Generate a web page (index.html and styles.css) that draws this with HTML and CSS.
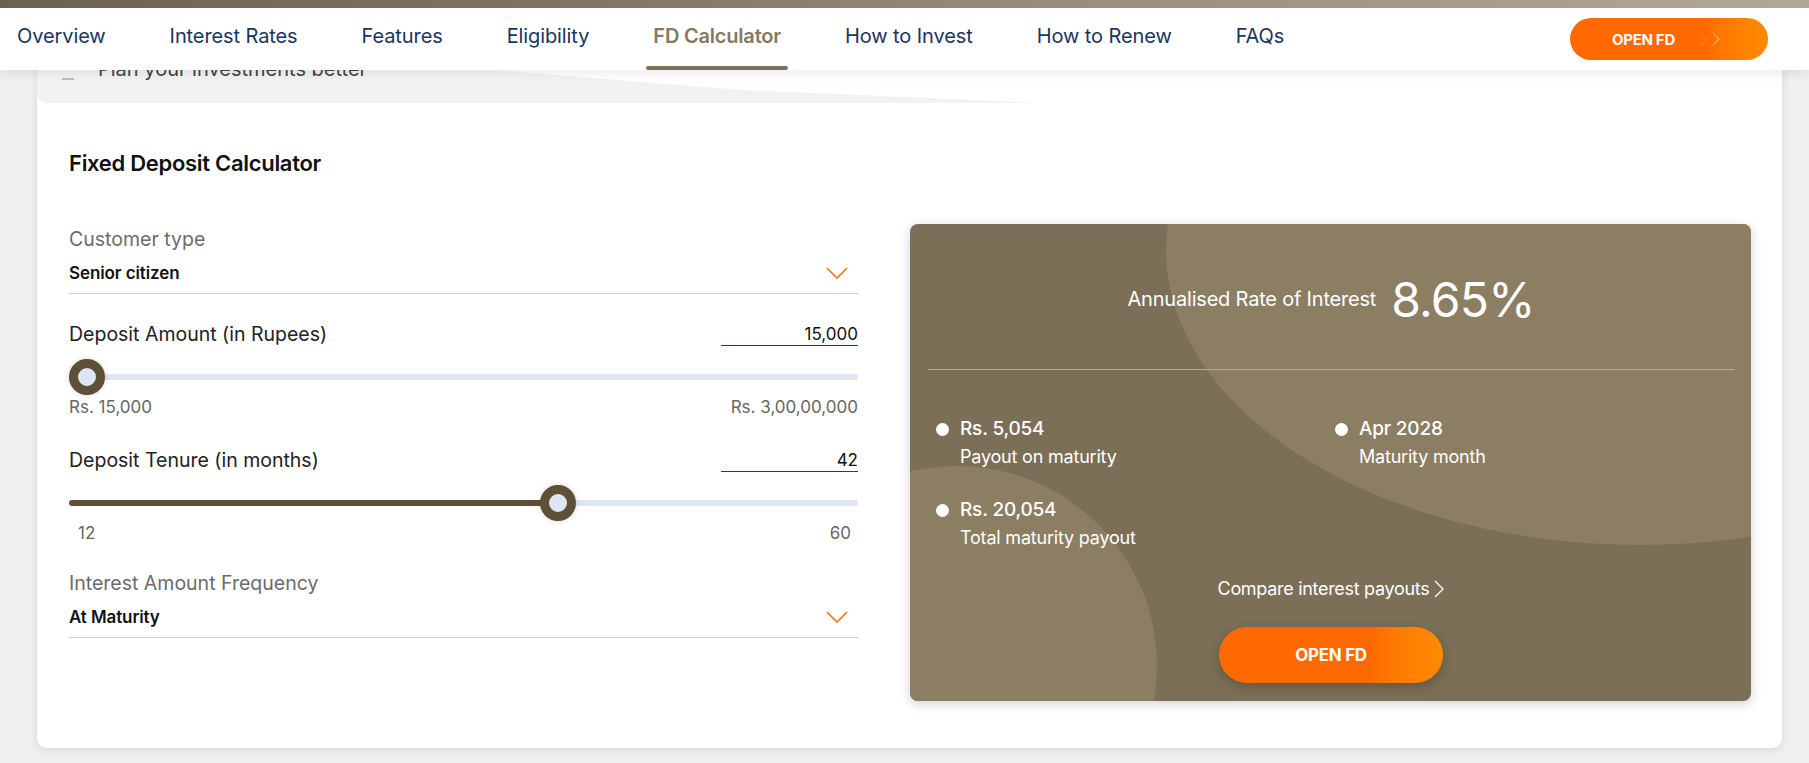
FILE: index.html
```html
<!DOCTYPE html>
<html lang="en">
<head>
    <meta charset="UTF-8">
    <meta name="viewport" content="width=device-width, initial-scale=1.0">
    <title>FD Calculator</title>
    <link rel="stylesheet" href="styles.css">
</head>
<body>
    <div class="topline"></div>

    <header class="nav">
        <ul class="nav-links">
            <li><a href="#">Overview</a></li>
            <li><a href="#">Interest Rates</a></li>
            <li><a href="#">Features</a></li>
            <li><a href="#">Eligibility</a></li>
            <li class="active"><a href="#">FD Calculator</a></li>
            <li><a href="#">How to Invest</a></li>
            <li><a href="#">How to Renew</a></li>
            <li><a href="#">FAQs</a></li>
        </ul>
        <a href="#" class="btn-open btn-nav">
            OPEN FD
            <svg class="arrows" width="24" height="14" viewBox="0 0 24 14">
                <polyline points="2,1 8,7 2,13" class="arrow-1"/>
                <polyline points="14,1 20,7 14,13" class="arrow-2"/>
            </svg>
        </a>
    </header>

    <main class="page">
        <section class="card">
            <div class="banner">
                <span class="banner-icon"></span>
                <p>Plan your investments better</p>
            </div>

            <div class="calc">
                <h2>Fixed Deposit Calculator</h2>

                <div class="calc-grid">
                    <!-- inputs -->
                    <form class="calc-form">
                        <div class="select-field">
                            <label>Customer type</label>
                            <div class="select-value">
                                <span>Senior citizen</span>
                                <svg class="chevron" width="22" height="12" viewBox="0 0 22 12"><polyline points="1,1 11,11 21,1"/></svg>
                            </div>
                        </div>

                        <div class="range-field">
                            <div class="range-head">
                                <label>Deposit Amount (in Rupees)</label>
                                <input type="text" class="amount" value="15,000">
                            </div>
                            <input type="range" class="slider" min="15000" max="30000000" value="15000" style="--fill: 0%">
                            <div class="range-limits">
                                <span>Rs. 15,000</span>
                                <span>Rs. 3,00,00,000</span>
                            </div>
                        </div>

                        <div class="range-field">
                            <div class="range-head">
                                <label>Deposit Tenure (in months)</label>
                                <input type="text" class="amount" value="42">
                            </div>
                            <input type="range" class="slider" min="12" max="60" value="42" style="--fill: 62%">
                            <div class="range-limits months">
                                <span>12</span>
                                <span>60</span>
                            </div>
                        </div>

                        <div class="select-field">
                            <label>Interest Amount Frequency</label>
                            <div class="select-value">
                                <span>At Maturity</span>
                                <svg class="chevron" width="22" height="12" viewBox="0 0 22 12"><polyline points="1,1 11,11 21,1"/></svg>
                            </div>
                        </div>
                    </form>

                    <!-- result -->
                    <div class="result">
                        <div class="blob blob-big"></div>
                        <div class="blob blob-small"></div>

                        <div class="rate">
                            <span class="rate-label">Annualised Rate of Interest</span>
                            <span class="rate-value">8.65%</span>
                        </div>
                        <hr class="divider">

                        <div class="stats">
                            <div class="stat">
                                <div class="stat-value">Rs. 5,054</div>
                                <div class="stat-label">Payout on maturity</div>
                            </div>
                            <div class="stat">
                                <div class="stat-value">Apr 2028</div>
                                <div class="stat-label">Maturity month</div>
                            </div>
                            <div class="stat">
                                <div class="stat-value">Rs. 20,054</div>
                                <div class="stat-label">Total maturity payout</div>
                            </div>
                        </div>

                        <a href="#" class="compare">
                            Compare interest payouts
                            <svg width="10" height="18" viewBox="0 0 10 18"><polyline points="1,1 9,9 1,17"/></svg>
                        </a>

                        <div class="result-action">
                            <a href="#" class="btn-open btn-big">OPEN FD</a>
                        </div>
                    </div>
                </div>
            </div>
        </section>
    </main>
</body>
</html>
```

FILE: styles.css
```css
body {
    margin: 0;
    background-color: #efefef;
    font-family: Inter, "Noto Sans", sans-serif;
    color: #222;
}
a {
    text-decoration: none;
}

/* thin strip above the menu */
.topline {
    height: 8px;
    background: linear-gradient(90deg, #6c6250 0%, #7f745f 30%, #9a8f7a 60%, #b2a896 100%);
}

/* menu */
.nav {
    position: relative;
    z-index: 5;
    height: 62px;
    display: flex;
    align-items: center;
    padding: 0 41px 0 10px;
    background-color: #fff;
    box-shadow: 0 4px 10px rgba(0, 0, 0, 0.07);
}
.nav-links {
    display: flex;
    gap: 50px;
    height: 100%;
    margin: 0;
    padding: 0;
    list-style: none;
}
.nav-links li {
    position: relative;
    display: flex;
    align-items: center;
    padding: 0 7px 6px;
}
.nav-links a {
    font-size: 20px;
    color: #1c3560;
    letter-spacing: -0.1px;
}
.nav-links .active a {
    color: #857a5e;
    font-weight: 600;
    letter-spacing: -0.2px;
}
.nav-links .active::after {
    content: "";
    position: absolute;
    left: 0;
    right: 0;
    bottom: 0;
    height: 4px;
    border-radius: 2px;
    background-color: #7d7055;
}

/* orange pill button */
.btn-open {
    display: inline-flex;
    align-items: center;
    color: #fff;
    font-weight: 700;
    letter-spacing: -0.3px;
    border-radius: 30px;
    background: linear-gradient(90deg, #ff6900 0%, #ff6900 68%, #ff7600 76%, #ff8200 88%, #ff8a00 100%);
}
.btn-nav {
    margin-left: auto;
    width: 198px;
    height: 42px;
    box-sizing: border-box;
    padding-left: 42px;
    font-size: 15px;
}
.btn-nav .arrows {
    margin-left: 24px;
    fill: none;
    stroke-width: 1.4;
}
.arrow-1 {
    stroke: rgba(255, 255, 255, 0.1);
}
.arrow-2 {
    stroke: rgba(255, 255, 255, 0.35);
}

/* page */
.page {
    padding: 0 27px 15px 37px;
}
.card {
    margin-top: -40px;
    background-color: #fff;
    border-radius: 10px;
    box-shadow: 0 2px 10px rgba(0, 0, 0, 0.1);
}
.banner {
    position: relative;
    width: 1003px;
    height: 73px;
    box-sizing: border-box;
    padding: 28px 0 0 69px;
    display: flex;
    gap: 24px;
    background-color: #f2f2f2;
    border-radius: 10px 0 0 10px;
    clip-path: polygon(0 0, 46% 0, 46% 55%, 52% 62%, 70% 82%, 100% 100%, 0 100%);
}
.banner-icon {
    width: 12px;
    height: 22px;
    margin-left: -44px;
    border-bottom: 2px solid #bbb;
    box-sizing: border-box;
}
.banner p {
    margin: 0;
    font-size: 20px;
    line-height: 22px;
    color: #444;
}

.calc {
    padding: 46px 31px 47px 32px;
}
.calc h2 {
    margin: 0;
    font-size: 22px;
    line-height: 28px;
    font-weight: 600;
    color: #111;
    letter-spacing: -0.3px;
}
.calc-grid {
    display: grid;
    grid-template-columns: 789px 1fr;
    gap: 52px;
    margin-top: 47px;
}

/* left column */
.calc-form {
    padding-top: 4px;
}
.select-field label {
    display: block;
    font-size: 19.5px;
    line-height: 22px;
    color: #6b6b6b;
}
.select-value {
    display: flex;
    justify-content: space-between;
    align-items: center;
    margin-top: 13px;
    padding: 0 10px 10px 0;
    border-bottom: 1px solid #cfcfcf;
    font-size: 17px;
    line-height: 20px;
    font-weight: 600;
    color: #111;
    letter-spacing: -0.1px;
}
.chevron {
    fill: none;
    stroke: #ff6a00;
    stroke-width: 1.5;
}
.select-field + .range-field {
    margin-top: 28px;
}
.range-field + .range-field {
    margin-top: 31px;
}
.range-field + .select-field {
    margin-top: 29px;
}
.range-head {
    display: flex;
    justify-content: space-between;
    align-items: flex-end;
}
.range-head label {
    font-size: 19.5px;
    line-height: 24px;
    color: #222;
}
.amount {
    width: 137px;
    height: 23px;
    box-sizing: border-box;
    padding: 0;
    border: none;
    border-bottom: 1.5px solid #253a66;
    font-family: inherit;
    font-size: 17px;
    text-align: right;
    color: #111;
    background: none;
    outline: none;
}

/* sliders */
.slider {
    display: block;
    width: 100%;
    height: 36px;
    margin: 13px 0 0;
    background: none;
    -webkit-appearance: none;
    appearance: none;
}
.slider::-webkit-slider-runnable-track {
    height: 6px;
    border-radius: 3px;
    background: linear-gradient(90deg, #5e5038 var(--fill), #dfe5f2 var(--fill));
}
.slider::-webkit-slider-thumb {
    -webkit-appearance: none;
    width: 36px;
    height: 36px;
    margin-top: -15px;
    box-sizing: border-box;
    border-radius: 50%;
    border: 9px solid #5e5038;
    background-color: #dfe5f2;
    box-shadow: 0 0 6px rgba(0, 0, 0, 0.15);
}
.range-limits {
    display: flex;
    justify-content: space-between;
    margin-top: 2px;
    font-size: 17px;
    line-height: 20px;
    color: #666;
}
.range-limits.months {
    padding: 0 7px 0 9px;
}

/* right column */
.result {
    position: relative;
    overflow: hidden;
    padding: 46px 17px 18px 18px;
    border-radius: 8px;
    background-color: #7b6f58;
    color: #fff;
    box-shadow: 0 3px 12px rgba(0, 0, 0, 0.18);
}
.blob {
    position: absolute;
    border-radius: 50%;
    background-color: #8b7e62;
}
.blob-big {
    left: 256px;
    top: -269px;
    width: 948px;
    height: 590px;
}
.blob-small {
    left: -153px;
    top: 242px;
    width: 400px;
    height: 400px;
}
.rate, .divider, .stats, .compare, .result-action {
    position: relative;
}
.rate {
    display: flex;
    justify-content: center;
    align-items: center;
    gap: 15px;
    height: 58px;
}
.rate-label {
    font-size: 20px;
    letter-spacing: -0.2px;
}
.rate-value {
    font-size: 48px;
    letter-spacing: -0.8px;
}
.divider {
    margin: 41px 0 0;
    border: none;
    height: 1px;
    background-color: #b5ab95;
}
.stats {
    display: grid;
    grid-template-columns: 1fr 1fr;
    row-gap: 32px;
    margin-top: 48px;
    padding-left: 8px;
}
.stat {
    padding-left: 24px;
    position: relative;
}
.stat::before {
    content: "";
    position: absolute;
    left: 0;
    top: 5px;
    width: 13px;
    height: 13px;
    border-radius: 50%;
    background-color: #fff;
}
.stat-value {
    font-size: 19px;
    line-height: 22px;
    font-weight: 500;
    letter-spacing: -0.2px;
}
.stat-label {
    margin-top: 7px;
    font-size: 18px;
    line-height: 20px;
    letter-spacing: -0.2px;
}
.compare {
    display: flex;
    justify-content: center;
    align-items: center;
    gap: 5px;
    margin-top: 30px;
    font-size: 18px;
    line-height: 22px;
    color: #fff;
    letter-spacing: -0.3px;
}
.compare svg {
    fill: none;
    stroke: #fff;
    stroke-width: 1.3;
}
.result-action {
    display: flex;
    justify-content: center;
    margin-top: 27px;
}
.btn-big {
    justify-content: center;
    width: 224px;
    height: 56px;
    font-size: 17px;
    box-shadow: 0 4px 12px rgba(60, 40, 10, 0.35);
}
```
